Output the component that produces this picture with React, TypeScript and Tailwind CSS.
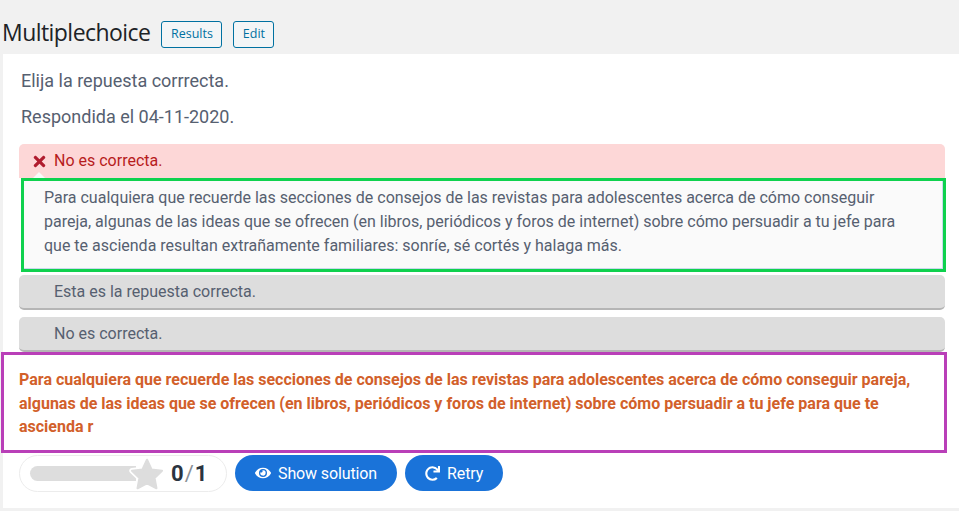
import { FaEye, FaRedo, FaTimes } from "react-icons/fa";

function AdminButton({ label, width }: { label: string; width: string }) {
  return (
    <button className={`h-[27px] rounded-[3px] border border-[#0071a1] bg-[#f3f5f6] font-['Open_Sans',sans-serif] text-[12.5px] font-medium leading-none text-[#0071a1] ${width}`}>
      {label}
    </button>
  );
}

function GrayAnswer({ text }: { text: string }) {
  return (
    <div className="flex h-[35px] items-center rounded-[5px] border-b-2 border-[#b5b5b5] bg-[#dddddd] pl-[35px] text-[16px] text-[#566070]">
      {text}
    </div>
  );
}

function ActionButton({ icon, label }: { icon: React.ReactNode; label: string }) {
  return (
    <button className="flex h-[36px] items-center gap-[7px] rounded-full bg-[#1a73d9] px-5 text-[16px] tracking-[-0.12px] text-white">
      {icon}
      <span className="pt-px">{label}</span>
    </button>
  );
}

function ScoreStar() {
  const points = "12,2.5 15,9 22,9.8 17,14.7 18.3,21.5 12,18.2 5.7,21.5 7,14.7 2,9.8 9,9";
  return (
    <svg viewBox="0 0 24 24" className="-ml-[7px] h-[36px] w-[36px] shrink-0">
      <polygon points={points} fill="#fff" stroke="#fff" strokeWidth="3.6" strokeLinejoin="round" />
      <polygon points={points} fill="#dddddd" stroke="#dddddd" strokeWidth="1.4" strokeLinejoin="round" />
    </svg>
  );
}

export default function App() {
  return (
    <div className="flex h-[511px] w-[959px] flex-col overflow-hidden bg-[#f1f1f1] font-['Roboto',sans-serif]">
      <header className="flex h-[54px] shrink-0 items-end gap-[11px] pb-[6px] pl-[2px]">
        <h1 className="font-['Open_Sans',sans-serif] text-[23px] leading-[32px] tracking-[-0.55px] text-[#1d2327]">
          Multiplechoice
        </h1>
        <AdminButton label="Results" width="w-[61px]" />
        <AdminButton label="Edit" width="w-[41px]" />
      </header>

      <main className="ml-[3px] h-[454px] shrink-0 bg-white">
        <div className="pl-[18px] pt-4 text-[18px] leading-[22px] text-[#566070]">
          <p>Elija la repuesta corrrecta.</p>
          <p className="mt-[13.5px]">Respondida el 04-11-2020.</p>
        </div>

        <div className="relative ml-4 mt-[16.5px] w-[926px]">
          <div className="flex h-[34px] items-center gap-[7px] rounded-t-[5px] bg-[#fdd7d7] pl-[13px] text-[16px] text-[#b71c1c]">
            <FaTimes size={17} className="-mx-px text-[#b01c2e]" />
            No es correcta.
          </div>
          <div className="absolute bottom-0 left-[14px] h-0 w-0 border-x-[6px] border-b-[6px] border-x-transparent border-b-[#fafafa]" />
        </div>

        <div className="relative ml-[18px] w-[925px] border-[3px] border-[#0fd14e]">
          <div className="h-[88px] border-b border-r border-[#c9d9ec] bg-[#fafafa] pl-5 pt-[5px] text-[16px] leading-[24px] text-[#566070]">
            Para cualquiera que recuerde las secciones de consejos de las revistas para adolescentes acerca de cómo conseguir
            <br />
            pareja, algunas de las ideas que se ofrecen (en libros, periódicos y foros de internet) sobre cómo persuadir a tu jefe para
            <br />
            que te ascienda resultan extrañamente familiares: sonríe, sé cortés y halaga más.
          </div>
        </div>

        <div className="ml-4 mt-[3px] flex w-[926px] flex-col gap-[7px]">
          <GrayAnswer text="Esta es la repuesta correcta." />
          <GrayAnswer text="No es correcta." />
        </div>

        <div className="-ml-[2px] h-[101px] w-[946px] border-[3px] border-[#b93fb8] pl-[15px] pt-[13px] text-[16px] font-bold leading-[23.5px] text-[#d2602a]">
          Para cualquiera que recuerde las secciones de consejos de las revistas para adolescentes acerca de cómo conseguir pareja,
          <br />
          algunas de las ideas que se ofrecen (en libros, periódicos y foros de internet) sobre cómo persuadir a tu jefe para que te
          <br />
          ascienda r
        </div>

        <div className="ml-4 mt-[2px] flex items-start gap-2">
          <div className="flex h-[37px] w-[208px] items-center rounded-full border border-[#ececec] pl-[10px]">
            <div className="h-[15px] w-[106px] rounded-l-full bg-[#dddddd]" />
            <ScoreStar />
            <span className="ml-[6px] text-[22px] font-bold leading-none text-[#2b3440]">
              0<span className="mx-[1px] font-normal text-[#8a8f96]">/</span>1
            </span>
          </div>
          <ActionButton icon={<FaEye size={16} />} label="Show solution" />
          <ActionButton icon={<FaRedo size={15} />} label="Retry" />
        </div>
      </main>
    </div>
  );
}
